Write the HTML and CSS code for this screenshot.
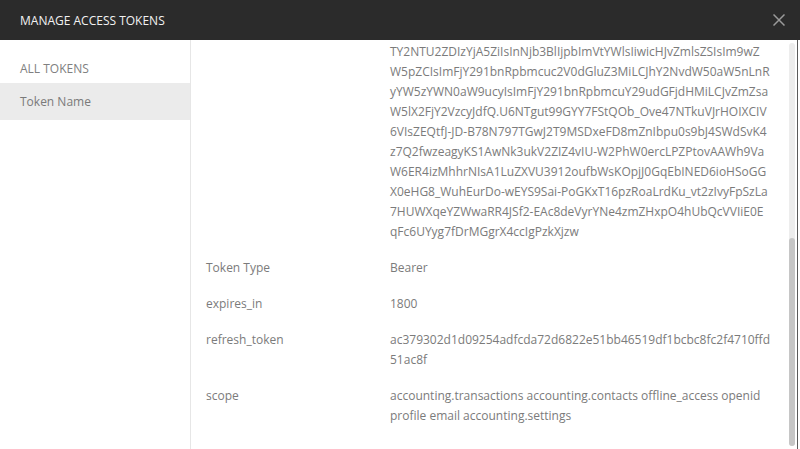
FILE: index.html
```html
<!DOCTYPE html>
<html>
<head>
<meta charset="utf-8">
<link rel="stylesheet" href="styles.css">
</head>
<body>
<div class="modal">
  <header class="modal-header">
    <h1 class="title">MANAGE ACCESS TOKENS</h1>
    <button class="close" aria-label="Close">
      <svg width="12" height="12" viewBox="0 0 12 12"><path d="M0.5 0.5 L11.5 11.5 M11.5 0.5 L0.5 11.5" stroke="#9a9a9a" stroke-width="1.5" fill="none"/></svg>
    </button>
  </header>
  <div class="modal-body">
    <aside class="sidebar">
      <div class="side-heading">ALL TOKENS</div>
      <div class="side-item active">Token Name</div>
    </aside>
    <main class="details">
      <div class="grid">
        <div class="label"></div>
        <div class="value">TY2NTU2ZDIzYjA5ZiIsInNjb3BlIjpbImVtYWlsIiwicHJvZmlsZSIsIm9wZ<br>W5pZCIsImFjY291bnRpbmcuc2V0dGluZ3MiLCJhY2NvdW50aW5nLnR<br>yYW5zYWN0aW9ucyIsImFjY291bnRpbmcuY29udGFjdHMiLCJvZmZsa<br>W5lX2FjY2VzcyJdfQ.U6NTgut99GYY7FStQOb_Ove47NTkuVJrHOIXCIV<br>6VIsZEQtfJ-JD-B78N797TGwJ2T9MSDxeFD8mZnIbpu0s9bJ4SWdSvK4<br>z7Q2fwzeagyKS1AwNk3ukV2ZIZ4vIU-W2PhW0ercLPZPtovAAWh9Va<br>W6ER4izMhhrNIsA1LuZXVU3912oufbWsKOpjJ0GqEbINED6ioHSoGG<br>X0eHG8_WuhEurDo-wEYS9Sai-PoGKxT16pzRoaLrdKu_vt2zIvyFpSzLa<br>7HUWXqeYZWwaRR4JSf2-EAc8deVyrYNe4zmZHxpO4hUbQcVVIiE0E<br>qFc6UYyg7fDrMGgrX4ccIgPzkXjzw</div>

        <div class="label">Token Type</div>
        <div class="value">Bearer</div>

        <div class="label">expires_in</div>
        <div class="value">1800</div>

        <div class="label">refresh_token</div>
        <div class="value">ac379302d1d09254adfcda72d6822e51bb46519df1bcbc8fc2f4710ffd<br>51ac8f</div>

        <div class="label">scope</div>
        <div class="value">accounting.transactions accounting.contacts offline_access openid<br>profile email accounting.settings</div>
      </div>
    </main>
    <div class="scrollbar">
      <div class="track"><div class="thumb"></div></div>
    </div>
    <div class="edge"></div>
  </div>
</div>
</body>
</html>
```

FILE: styles.css
```css
* { box-sizing: border-box; }
html, body {
  margin: 0;
  padding: 0;
  width: 800px;
  height: 449px;
  overflow: hidden;
  background: #ffffff;
  font-family: "Open Sans", "Liberation Sans", sans-serif;
}
.modal {
  width: 800px;
  height: 449px;
  display: flex;
  flex-direction: column;
}
.modal-header {
  height: 40px;
  flex: 0 0 40px;
  background: #2b2b2b;
  display: flex;
  align-items: center;
  justify-content: space-between;
  padding: 0 15px 0 20px;
}
.title {
  margin: 0;
  font-size: 12px;
  font-weight: 400;
  color: #f2f2f2;
  letter-spacing: 0;
}
.close {
  border: 0;
  background: transparent;
  padding: 0;
  width: 12px;
  height: 12px;
  display: flex;
}
.modal-body {
  flex: 1;
  display: flex;
  min-height: 0;
}
.sidebar {
  width: 191px;
  flex: 0 0 191px;
  border-right: 1px solid #e6e6e6;
  padding-top: 19px;
}
.side-heading {
  font-size: 12px;
  line-height: 20px;
  color: #808080;
  padding: 0 20px;
  margin-bottom: 4px;
}
.side-item {
  font-size: 12px;
  line-height: 21px;
  padding: 8px 20px;
  color: #7a7a7a;
}
.side-item.active {
  background: #ebebeb;
}
.details {
  flex: 1;
  padding: 2px 0 0 15px;
  overflow: hidden;
}
.grid {
  display: grid;
  grid-template-columns: 184px 1fr;
  row-gap: 16px;
  font-size: 12px;
  line-height: 20px;
  color: #7b7b7b;
}
.value {
  white-space: nowrap;
}
.scrollbar {
  flex: 0 0 7px;
  padding: 3px 0 3px 0;
  margin-right: 1px;
}
.track {
  width: 6px;
  height: 100%;
  background: #ededed;
  border-radius: 3px;
  display: flex;
  flex-direction: column;
  justify-content: flex-end;
}
.thumb {
  height: 208px;
  background: #c6c6c6;
  border-radius: 3px;
}
.edge {
  flex: 0 0 1px;
  background: #5a5a5a;
  margin-right: 2px;
}
```
